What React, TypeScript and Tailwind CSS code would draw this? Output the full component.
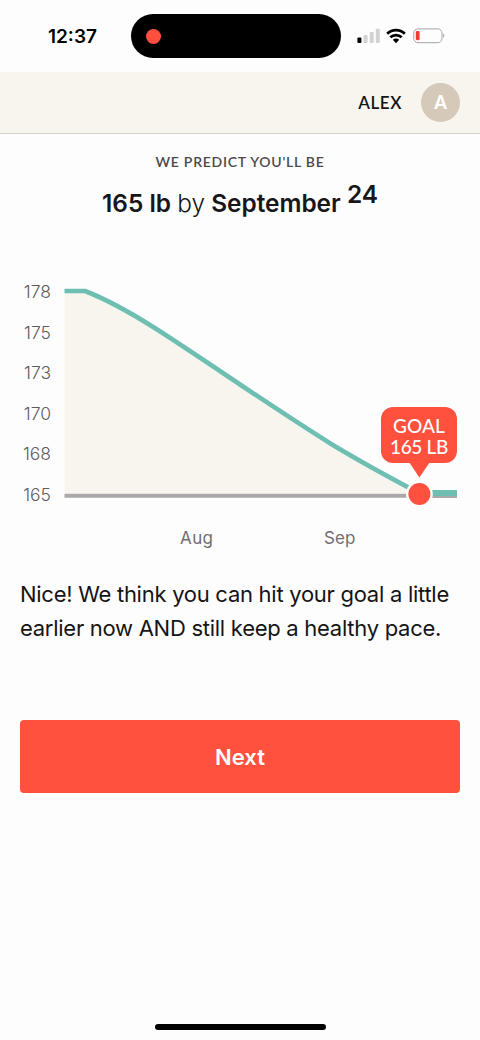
const weights = ["178", "175", "173", "170", "168", "165"];

function SignalIcon() {
  return (
    <svg width="24" height="16" viewBox="0 0 24 16">
      <rect x="0.4" y="9.4" width="4" height="5.6" rx="1" fill="#000" />
      <rect x="6.6" y="7" width="4" height="8" rx="1" fill="#d2d1d3" />
      <rect x="12.7" y="4" width="4" height="11" rx="1" fill="#d2d1d3" />
      <rect x="18.8" y="0.8" width="4" height="14.2" rx="1" fill="#d2d1d3" />
    </svg>
  );
}

function WifiIcon() {
  return (
    <svg width="20" height="16" viewBox="0 0 20 16" fill="none" stroke="#000" strokeWidth="2.8">
      <path d="M1.2 5.7C6.1 0.9 13.9 0.9 18.8 5.7" />
      <path d="M4.3 9.3C7.5 6.3 12.5 6.3 15.7 9.3" />
      <path d="M6.8 11.8C8.6 10.2 11.4 10.2 13.2 11.8L10 15.2Z" fill="#000" stroke="none" />
    </svg>
  );
}

function BatteryIcon() {
  return (
    <svg width="32" height="16" viewBox="0 0 32 16">
      <rect x="0.7" y="0.9" width="28.3" height="13.8" rx="4.3" fill="none" stroke="#a5a4a6" />
      <rect x="2.8" y="3" width="3.8" height="9.2" rx="1.4" fill="#ef3b32" />
      <path d="M30.2 5.6C31.8 6.4 31.8 9 30.2 9.8Z" fill="#a5a4a6" />
    </svg>
  );
}

function StatusBar() {
  return (
    <div className="flex h-[72px] items-start pt-[14px]">
      <div className="w-[131px] pl-[48px] pt-[9px] font-['Inter'] text-[19px] leading-[28px] font-semibold text-black">
        12:37
      </div>
      <div className="flex h-[44px] w-[210px] items-center rounded-full bg-black pl-[15px]">
        <div className="size-[15px] rounded-full bg-[#ff4f3d]" />
      </div>
      <div className="flex pt-[14px] pl-[16px]">
        <SignalIcon />
        <div className="ml-[5px]">
          <WifiIcon />
        </div>
        <div className="ml-[7px]">
          <BatteryIcon />
        </div>
      </div>
    </div>
  );
}

function Header() {
  return (
    <header className="flex h-[62px] items-center justify-end border-b border-[#d5d2c0] bg-[#f7f5ee] pr-[20px]">
      <span className="font-['Lato'] text-[17px] leading-[20px] font-semibold tracking-[0.6px] text-[#151515]">
        ALEX
      </span>
      <div className="ml-[19px] flex size-[39px] items-center justify-center rounded-full bg-[#d5c9b9] font-['Lato'] text-[18px] font-black text-white">
        A
      </div>
    </header>
  );
}

function GoalMarker() {
  return (
    <div className="absolute top-[123px] left-[317px] flex h-[56px] w-[76px] flex-col items-center justify-center rounded-[12px] bg-[#ff513d] pt-[2px] font-['Lato'] text-[19px] leading-[21px] font-medium text-white">
      <span className="tracking-[0.1px]">GOAL</span>
      <span className="tracking-[-0.3px]">165 LB</span>
    </div>
  );
}

function WeightChart() {
  return (
    <div className="font-['Inter'] text-[17px] text-[#706d72]">
      <div className="flex h-[222px]">
        <div className="flex w-[64px] flex-col pr-[13px] text-right text-[17.5px] font-light text-[#5f5c61]">
          {weights.map((w) => (
            <div key={w} className="h-[40.6px] shrink-0 leading-[15px]">
              {w}
            </div>
          ))}
        </div>
        <div className="relative">
          <svg width="396" height="222" viewBox="64 284 396 222" fill="none">
            <path
              d="M64.5 291H85C108 300 131 313 154 327.5C183 346 211 365 240 384.5C270 404.5 300 424.5 330 443.2C356 459 381 473 419 493.5H64.5Z"
              fill="#f7f5ee"
            />
            <path d="M64.5 495.7H407" stroke="#aaa8a8" strokeWidth="4" />
            <path d="M432 497H457" stroke="#aaa8a8" strokeWidth="2" />
            <path
              d="M64.5 291H85C108 300 131 313 154 327.5C183 346 211 365 240 384.5C270 404.5 300 424.5 330 443.2C356 459 381 473 419 493"
              stroke="#6ebfb2"
              strokeWidth="4.6"
              strokeLinejoin="round"
            />
            <path d="M432 493H457" stroke="#6ebfb2" strokeWidth="6" />
            <circle cx="419.4" cy="494" r="13.4" fill="#fefdfe" />
            <circle cx="419.4" cy="494" r="11" fill="#ff513d" />
            <path d="M409 462H430L419.4 477.5Z" fill="#ff513d" />
          </svg>
          <GoalMarker />
        </div>
      </div>
      <div className="flex pt-[20px] leading-[25px]">
        <span className="ml-[180px] w-[144px] tracking-[0.4px]">Aug</span>
        <span className="tracking-[0.1px]">Sep</span>
      </div>
    </div>
  );
}

export default function App() {
  return (
    <div className="flex h-[1040px] w-[480px] flex-col overflow-hidden bg-[#fefdfe]">
      <StatusBar />
      <Header />

      {/* Prediction */}
      <div className="h-[150px] pt-[18px] text-center">
        <p className="font-['Lato'] text-[14px] leading-[20px] font-semibold tracking-[0.75px] text-[#4b494c]">
          WE PREDICT YOU'LL BE
        </p>
        <h1 className="mt-[14px] font-['Inter'] text-[24.4px] leading-[34px] font-semibold whitespace-nowrap text-[#171619]">
          165 lb <span className="font-light">by</span> September{" "}
          <span className="relative top-[-9px]">24</span>
        </h1>
      </div>

      <WeightChart />

      <p className="mt-[26px] h-[70px] pl-[20px] font-['Inter'] text-[22px] leading-[34px] tracking-[-0.27px] whitespace-nowrap text-[#151416]">
        Nice! We think you can hit your goal a little
        <br />
        earlier now AND still keep a healthy pace.
      </p>

      <button className="mx-[20px] mt-[73px] h-[73px] shrink-0 rounded-[4px] bg-[#ff513d] pt-[2px] font-['Inter'] text-[22px] font-semibold text-white">
        Next
      </button>

      {/* Home indicator */}
      <div className="mx-auto mt-auto mb-[10px] h-[6px] w-[171px] rounded-full bg-black" />
    </div>
  );
}
